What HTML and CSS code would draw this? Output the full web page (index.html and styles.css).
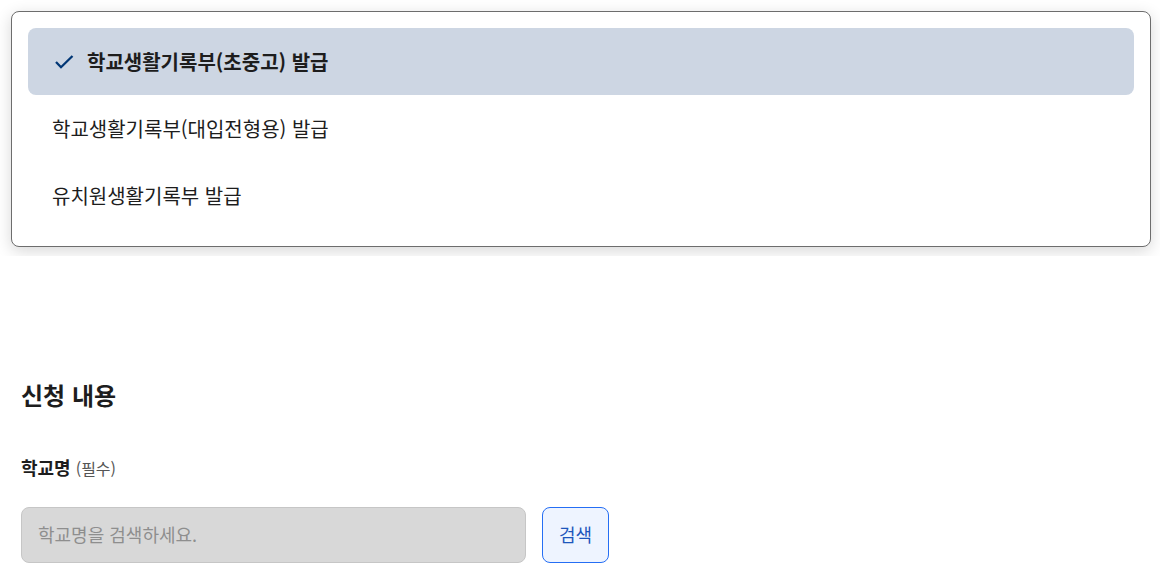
FILE: index.html
```html
<!DOCTYPE html>
<html lang="ko">
<head>
<meta charset="utf-8">
<meta name="viewport" content="width=device-width, initial-scale=1">
<title>신청 내용</title>
<link rel="stylesheet" href="styles.css">
</head>
<body>
<main>
  <div class="options-area">
    <div class="options" role="listbox" aria-label="발급 종류">
      <button class="option option-selected" type="button" role="option" aria-selected="true">
        <svg class="check" viewBox="0 0 24 24" aria-hidden="true"><path d="M4 12 9 17.2 20.5 6"/></svg>
        <span>학교생활기록부(초중고) 발급</span>
      </button>
      <button class="option" type="button" role="option" aria-selected="false">학교생활기록부(대입전형용) 발급</button>
      <button class="option" type="button" role="option" aria-selected="false">유치원생활기록부 발급</button>
    </div>
  </div>
  <form class="application">
    <h2 class="title">신청 내용</h2>
    <label class="label" for="school">학교명 <span class="required">(필수)</span></label>
    <div class="search">
      <input class="field" id="school" type="text" placeholder="학교명을 검색하세요." disabled>
      <button class="submit" type="button">검색</button>
    </div>
  </form>
</main>
</body>
</html>
```

FILE: styles.css
```css
* { box-sizing: border-box; }

body {
  margin: 0;
  background: #fff;
  color: #1d1d1d;
  font-family: "Noto Sans CJK KR", sans-serif;
}

button, input { font-family: inherit; }

.options-area {
  overflow: hidden;
  padding: 11px 9px 9px 11px;
}

.options {
  display: flex;
  flex-direction: column;
  padding: 16px 16px 17px;
  border: 1px solid #6d6d6d;
  border-radius: 8px;
  background: #fff;
  box-shadow: 0 4px 16px rgba(0, 0, 0, 0.16);
}

.option {
  display: flex;
  align-items: center;
  gap: 11px;
  min-height: 67px;
  padding: 17px 24px 16px;
  border: 0;
  border-radius: 8px;
  background: transparent;
  color: inherit;
  font-size: 20px;
  line-height: 28px;
  text-align: left;
}

.option-selected {
  background: #cdd6e3;
  font-weight: 700;
}

.check {
  width: 24px;
  height: 24px;
  fill: none;
  stroke: #003675;
  stroke-width: 2.3;
}

.application { padding: 119px 21px 24px; }

.title {
  margin: 0;
  font-size: 24px;
  line-height: 40px;
}

.label {
  display: block;
  margin-top: 39px;
  font-size: 18px;
  font-weight: 700;
  line-height: 26px;
}

.required {
  color: #555;
  font-size: 16px;
  font-weight: 400;
}

.search {
  display: flex;
  gap: 16px;
  margin-top: 26px;
}

.field {
  flex: 0 1 505px;
  min-width: 0;
  height: 56px;
  padding: 0 16px 2px;
  border: 1px solid #c6c6c6;
  border-radius: 8px;
  background: #d8d8d8;
  font-size: 18px;
}

.field::placeholder { color: #8e8e8e; opacity: 1; }

.submit {
  height: 56px;
  padding: 0 16px 2px;
  border: 1px solid #256ef4;
  border-radius: 8px;
  background: #eef4ff;
  color: #1d56bc;
  font-size: 18px;
}
```
